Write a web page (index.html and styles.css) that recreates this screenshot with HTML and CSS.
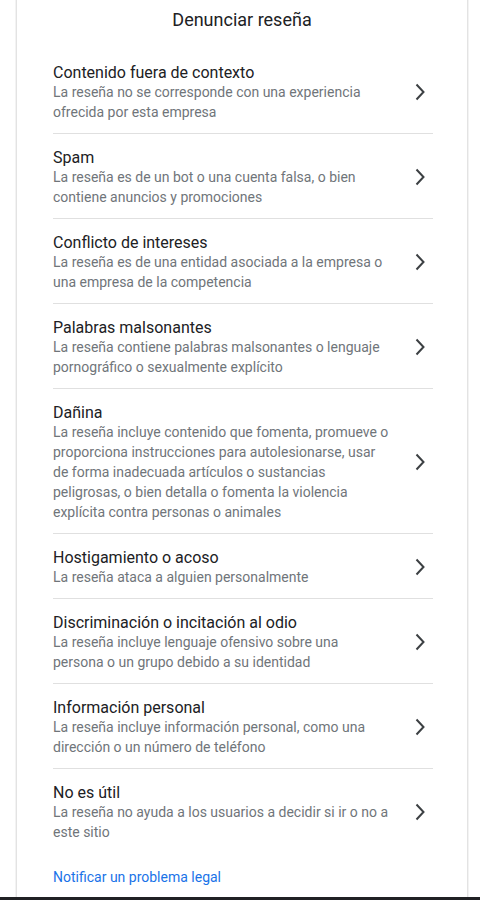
FILE: index.html
```html
<!DOCTYPE html>
<html lang="es">
<head>
<meta charset="utf-8">
<title>Denunciar reseña</title>
<link rel="stylesheet" href="styles.css">
</head>
<body>
<div class="page">
  <div class="card">
    <h1 class="heading">Denunciar reseña</h1>
    <ul class="list">
      <li class="item">
        <div class="text">
          <div class="title">Contenido fuera de contexto</div>
          <div class="desc">La reseña no se corresponde con una experiencia ofrecida por esta empresa</div>
        </div>
        <svg class="chev" viewBox="0 0 12 18" width="12" height="18"><polyline points="2.5,1.5 9.5,9 2.5,16.5"/></svg>
      </li>
      <li class="item">
        <div class="text">
          <div class="title">Spam</div>
          <div class="desc">La reseña es de un bot o una cuenta falsa, o bien contiene anuncios y promociones</div>
        </div>
        <svg class="chev" viewBox="0 0 12 18" width="12" height="18"><polyline points="2.5,1.5 9.5,9 2.5,16.5"/></svg>
      </li>
      <li class="item">
        <div class="text">
          <div class="title">Conflicto de intereses</div>
          <div class="desc">La reseña es de una entidad asociada a la empresa o una empresa de la competencia</div>
        </div>
        <svg class="chev" viewBox="0 0 12 18" width="12" height="18"><polyline points="2.5,1.5 9.5,9 2.5,16.5"/></svg>
      </li>
      <li class="item">
        <div class="text">
          <div class="title">Palabras malsonantes</div>
          <div class="desc">La reseña contiene palabras malsonantes o lenguaje pornográfico o sexualmente explícito</div>
        </div>
        <svg class="chev" viewBox="0 0 12 18" width="12" height="18"><polyline points="2.5,1.5 9.5,9 2.5,16.5"/></svg>
      </li>
      <li class="item">
        <div class="text">
          <div class="title">Dañina</div>
          <div class="desc">La reseña incluye contenido que fomenta, promueve o proporciona instrucciones para autolesionarse, usar de forma inadecuada artículos o sustancias peligrosas, o bien detalla o fomenta la violencia explícita contra personas o animales</div>
        </div>
        <svg class="chev" viewBox="0 0 12 18" width="12" height="18"><polyline points="2.5,1.5 9.5,9 2.5,16.5"/></svg>
      </li>
      <li class="item">
        <div class="text">
          <div class="title">Hostigamiento o acoso</div>
          <div class="desc">La reseña ataca a alguien personalmente</div>
        </div>
        <svg class="chev" viewBox="0 0 12 18" width="12" height="18"><polyline points="2.5,1.5 9.5,9 2.5,16.5"/></svg>
      </li>
      <li class="item">
        <div class="text">
          <div class="title">Discriminación o incitación al odio</div>
          <div class="desc">La reseña incluye lenguaje ofensivo sobre una persona o un grupo debido a su identidad</div>
        </div>
        <svg class="chev" viewBox="0 0 12 18" width="12" height="18"><polyline points="2.5,1.5 9.5,9 2.5,16.5"/></svg>
      </li>
      <li class="item">
        <div class="text">
          <div class="title">Información personal</div>
          <div class="desc">La reseña incluye información personal, como una dirección o un número de teléfono</div>
        </div>
        <svg class="chev" viewBox="0 0 12 18" width="12" height="18"><polyline points="2.5,1.5 9.5,9 2.5,16.5"/></svg>
      </li>
      <li class="item">
        <div class="text">
          <div class="title">No es útil</div>
          <div class="desc">La reseña no ayuda a los usuarios a decidir si ir o no a este sitio</div>
        </div>
        <svg class="chev" viewBox="0 0 12 18" width="12" height="18"><polyline points="2.5,1.5 9.5,9 2.5,16.5"/></svg>
      </li>
    </ul>
    <a class="legal" href="#">Notificar un problema legal</a>
  </div>
  <div class="bottom-bar"></div>
</div>
</body>
</html>
```

FILE: styles.css
```css
html, body {
  margin: 0;
  padding: 0;
  background: #ffffff;
}

body {
  font-family: Roboto, "Liberation Sans", Arial, sans-serif;
  color: #202124;
}

.page {
  height: 900px;
  display: flex;
  flex-direction: column;
}

.card {
  flex: 1;
  margin: 0 12px 0 16px;
  border-left: 1px solid #e3e3e3;
  border-right: 1px solid #e3e3e3;
  box-shadow: -1px 0 0 #f3f3f3, 1px 0 0 #f3f3f3;
  padding: 0 34px 0 36px;
  display: flex;
  flex-direction: column;
  overflow: hidden;
}

.heading {
  margin: 8px -34px 17px -36px;
  font-size: 18px;
  font-weight: 400;
  line-height: 24px;
  text-align: center;
  color: #202124;
}

.list {
  list-style: none;
  margin: 0;
  padding: 0;
}

.item {
  display: flex;
  align-items: center;
  padding: 13px 0 11px;
  border-bottom: 1px solid #e0e0e0;
}

.item:last-child {
  border-bottom: none;
}

.text {
  flex: 1;
  min-width: 0;
  padding-right: 24px;
}

.title {
  font-size: 16px;
  line-height: 20px;
  color: #202124;
  padding-top: 1px;
  margin-bottom: -1px;
}

.desc {
  font-size: 14px;
  line-height: 20px;
  color: #70757a;
}

.chev {
  flex: none;
  margin-right: 7px;
}

.chev polyline {
  fill: none;
  stroke: #3c4043;
  stroke-width: 2;
}

.legal {
  margin-top: 14px;
  font-size: 14px;
  line-height: 20px;
  color: #1a73e8;
  text-decoration: none;
  align-self: flex-start;
}

.bottom-bar {
  height: 3px;
  background: #202124;
  flex: none;
}
```
